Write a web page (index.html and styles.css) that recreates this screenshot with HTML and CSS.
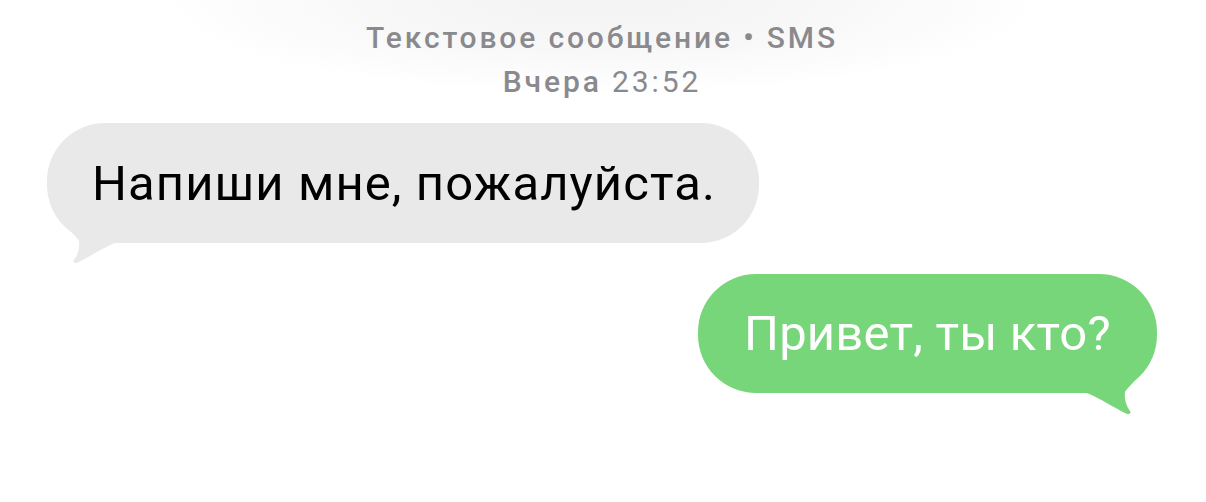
FILE: index.html
```html
<!DOCTYPE html>
<html lang="ru">
<head>
    <meta charset="UTF-8">
    <meta name="viewport" content="width=device-width, initial-scale=1.0">
    <title>Сообщения</title>
    <link rel="stylesheet" href="styles.css">
</head>
<body>
    <div class="thread">
        <div class="meta">
            <div>Текстовое сообщение • SMS</div>
            <div><b>Вчера</b> 23:52</div>
        </div>

        <div class="row in">
            <div class="bubble gray">
                Напиши мне, пожалуйста.
                <svg class="tail" viewBox="0 0 70 145" width="70" height="145">
                    <path d="M14,95 C20,106 29,113 32,118 C33,126 30,133 27,137 C25,140 29,141 32,139 C44,133 54,126 70,119 L70,95 Z"/>
                </svg>
            </div>
        </div>

        <div class="row out">
            <div class="bubble green">
                Привет, ты кто?
                <svg class="tail" viewBox="0 0 70 145" width="70" height="145">
                    <path d="M14,95 C20,106 29,113 32,118 C33,126 30,133 27,137 C25,140 29,141 32,139 C44,133 54,126 70,119 L70,95 Z"/>
                </svg>
            </div>
        </div>
    </div>
</body>
</html>
```

FILE: styles.css
```css
* { margin: 0; padding: 0; box-sizing: border-box; }
body {
    font-family: Roboto, "Liberation Sans", sans-serif;
    background: radial-gradient(ellipse 440px 95px at 603px 0, #f3f3f3 0%, #f8f8f8 55%, #ffffff 100%) no-repeat #fff;
    width: 1206px; height: 502px; overflow: hidden;
}
.thread { display: flex; flex-direction: column; padding: 16px 49px 0 47px; }
.meta {
    text-align: center; color: #8a8a8e; font-size: 30px; line-height: 44px;
    font-weight: 500; letter-spacing: 2.85px;
}
.meta b { font-weight: 500; }
.meta div:last-child { font-weight: 400; letter-spacing: 2.9px; }
.row { display: flex; }
.row.in { justify-content: flex-start; margin-top: 19px; }
.row.out { justify-content: flex-end; margin-top: 31px; }
.bubble {
    position: relative; height: 120px; border-radius: 58px;
    display: flex; align-items: center;
    font-size: 49px; white-space: nowrap;
}
.bubble.gray { background: #e9e9e9; color: #000; padding: 0 40px 0 45px; width: 712px; letter-spacing: 1.1px; }
.bubble.green { background: #78d67a; color: #fff; padding: 0 40px 0 46px; width: 459px; height: 119px; letter-spacing: 0.2px; }
.tail { position: absolute; top: 0; left: 0; }
.gray .tail path { fill: #e9e9e9; }
.green .tail { left: auto; right: 0; transform: scaleX(-1); }
.green .tail path { fill: #78d67a; }
```
